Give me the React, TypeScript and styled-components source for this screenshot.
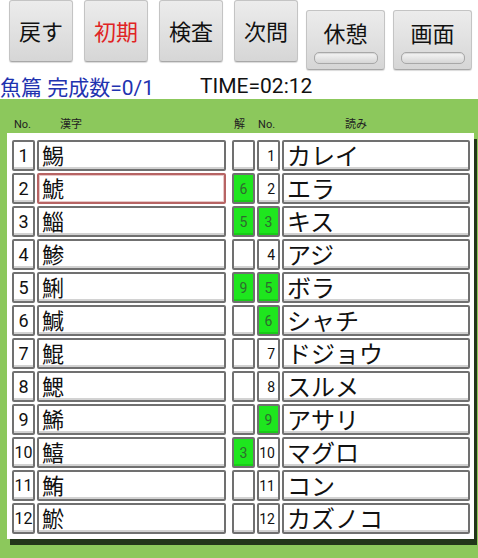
import React from "react";
import styled, { createGlobalStyle, css } from "styled-components";

const GlobalStyle = createGlobalStyle`
  html, body {
    margin: 0;
    padding: 0;
    background: #ffffff;
    overflow: hidden;
  }
  body {
    width: 478px;
    height: 558px;
    font-family: Roboto, "Noto Sans CJK JP", sans-serif;
  }
`;

const Screen = styled.div`
  width: 478px;
  height: 558px;
  display: flex;
  flex-direction: column;
`;

const Toolbar = styled.div`
  display: flex;
  align-items: flex-start;
  height: 72px;
  padding-left: 9px;
  gap: 11px;
`;

const ToggleGroup = styled.div`
  display: flex;
  gap: 8px;
  margin-left: -3px;
`;

const Button = styled.div<{ $red?: boolean; $toggle?: boolean }>`
  box-sizing: border-box;
  width: ${(p) => (p.$toggle ? "79px" : "64px")};
  height: ${(p) => (p.$toggle ? "60px" : "62px")};
  margin-top: ${(p) => (p.$toggle ? "10px" : "0")};
  display: flex;
  flex-direction: column;
  align-items: center;
  padding-top: ${(p) => (p.$toggle ? "8px" : "16px")};
  background: linear-gradient(#ececec, #d6d6d6);
  border: 1px solid #c4c4c4;
  border-bottom-color: #a8a8a8;
  border-radius: 3px;
  box-shadow: 0 1px 1px rgba(0, 0, 0, 0.15);
  font-family: "Noto Sans CJK JP", sans-serif;
  font-size: 22px;
  line-height: 26px;
  color: ${(p) => (p.$red ? "#e02424" : "#111111")};
`;

const Indicator = styled.div`
  margin-top: 7px;
  width: 62px;
  height: 10px;
  border-radius: 5px;
  background: linear-gradient(#f6f6f6, #d6d6d6);
  border: 1px solid #a8a8a8;
  box-shadow: inset 0 1px 1px rgba(0, 0, 0, 0.12);
`;

const Status = styled.div`
  display: flex;
  height: 27px;
  align-items: center;
  font-family: Roboto, "Noto Sans CJK JP", sans-serif;
  font-size: 21px;
`;

const Progress = styled.span`
  color: #1f33b0;
  width: 200px;
`;

const Timer = styled.span`
  color: #111111;
`;

const GreenArea = styled.div`
  flex: 1;
  background: #8cc85c;
  padding-left: 7px;
`;

const HeaderRow = styled.div`
  height: 34px;
  display: flex;
  align-items: flex-end;
  font-family: Roboto, "Noto Sans CJK JP", sans-serif;
  font-size: 11px;
  line-height: 15px;
  color: #222222;
`;

const HeaderLabel = styled.span<{ $x: number }>`
  margin-left: ${(p) => p.$x}px;
  padding-bottom: 1px;
`;

const Board = styled.div`
  width: 467px;
  height: 406px;
  box-sizing: border-box;
  background: #ffffff;
  padding: 7px 0 0 5px;
  box-shadow: 3px 6px 0 #22361a;
  display: flex;
  flex-direction: column;
  gap: 2px;
`;

const Row = styled.div`
  display: flex;
  height: 31px;
`;

const Cell = styled.div<{
  $w: number;
  $ml?: number;
  $green?: boolean;
  $focus?: boolean;
  $align?: "left" | "center" | "right";
  $size?: number;
}>`
  box-sizing: border-box;
  width: ${(p) => p.$w}px;
  margin-left: ${(p) => p.$ml ?? 2}px;
  height: 31px;
  border: 2px solid ${(p) => (p.$focus ? "#b76464" : "#707070")};
  border-radius: 2px;
  background: ${(p) => (p.$green ? "#1ee61e" : "#ffffff")};
  box-shadow: inset 0 -2px 0 ${(p) => (p.$green ? "#18cc18" : "#d2d2d2")};
  display: flex;
  align-items: center;
  justify-content: ${(p) =>
    p.$align === "right" ? "flex-end" : p.$align === "left" ? "flex-start" : "center"};
  padding: ${(p) => (p.$align === "left" ? "3px 0 0 3px" : p.$align === "right" ? "0 3px 0 0" : "0")};
  font-family: Roboto, "Noto Sans CJK JP", sans-serif;
  font-size: ${(p) => p.$size ?? 18}px;
  line-height: 1;
  color: ${(p) => (p.$green ? "#2f6a2f" : "#111111")};
  white-space: nowrap;
  ${(p) =>
    p.$focus &&
    css`
      box-shadow: inset 0 0 0 1px #e8c8c8;
    `}
`;

const kanji = ["鯣", "鯱", "鯔", "鯵", "鯏", "鰔", "鯤", "鰓", "鯑", "鱚", "鮪", "鯲"];
const yomi = [
  "カレイ",
  "エラ",
  "キス",
  "アジ",
  "ボラ",
  "シャチ",
  "ドジョウ",
  "スルメ",
  "アサリ",
  "マグロ",
  "コン",
  "カズノコ",
];
const answers: Record<number, number> = { 2: 6, 3: 5, 5: 9, 10: 3 };
const matched = new Set([3, 5, 6, 9]);

export default function App() {
  return (
    <Screen>
      <GlobalStyle />
      <Toolbar>
        <Button>戻す</Button>
        <Button $red>初期</Button>
        <Button>検査</Button>
        <Button>次問</Button>
        <ToggleGroup>
          <Button $toggle>
            休憩
            <Indicator />
          </Button>
          <Button $toggle>
            画面
            <Indicator />
          </Button>
        </ToggleGroup>
      </Toolbar>
      <Status>
        <Progress>魚篇 完成数=0/1</Progress>
        <Timer>TIME=02:12</Timer>
      </Status>
      <GreenArea>
        <HeaderRow>
          <HeaderLabel $x={7}>No.</HeaderLabel>
          <HeaderLabel $x={29}>漢字</HeaderLabel>
          <HeaderLabel $x={152}>解</HeaderLabel>
          <HeaderLabel $x={13}>No.</HeaderLabel>
          <HeaderLabel $x={70}>読み</HeaderLabel>
        </HeaderRow>
        <Board>
          {kanji.map((k, i) => {
            const n = i + 1;
            const ans = answers[n];
            return (
              <Row key={n}>
                <Cell $w={23} $ml={0} $size={n >= 10 ? 16 : 18}>
                  {n}
                </Cell>
                <Cell $w={189} $align="left" $size={22} $focus={n === 2}>
                  {k}
                </Cell>
                <Cell $w={23} $ml={6} $green={ans !== undefined} $size={14}>
                  {ans ?? ""}
                </Cell>
                <Cell
                  $w={23}
                  $ml={2}
                  $green={matched.has(n)}
                  $align={matched.has(n) ? "center" : "right"}
                  $size={14}
                >
                  {n}
                </Cell>
                <Cell $w={188} $ml={2} $align="left" $size={24}>
                  {yomi[i]}
                </Cell>
              </Row>
            );
          })}
        </Board>
      </GreenArea>
    </Screen>
  );
}
